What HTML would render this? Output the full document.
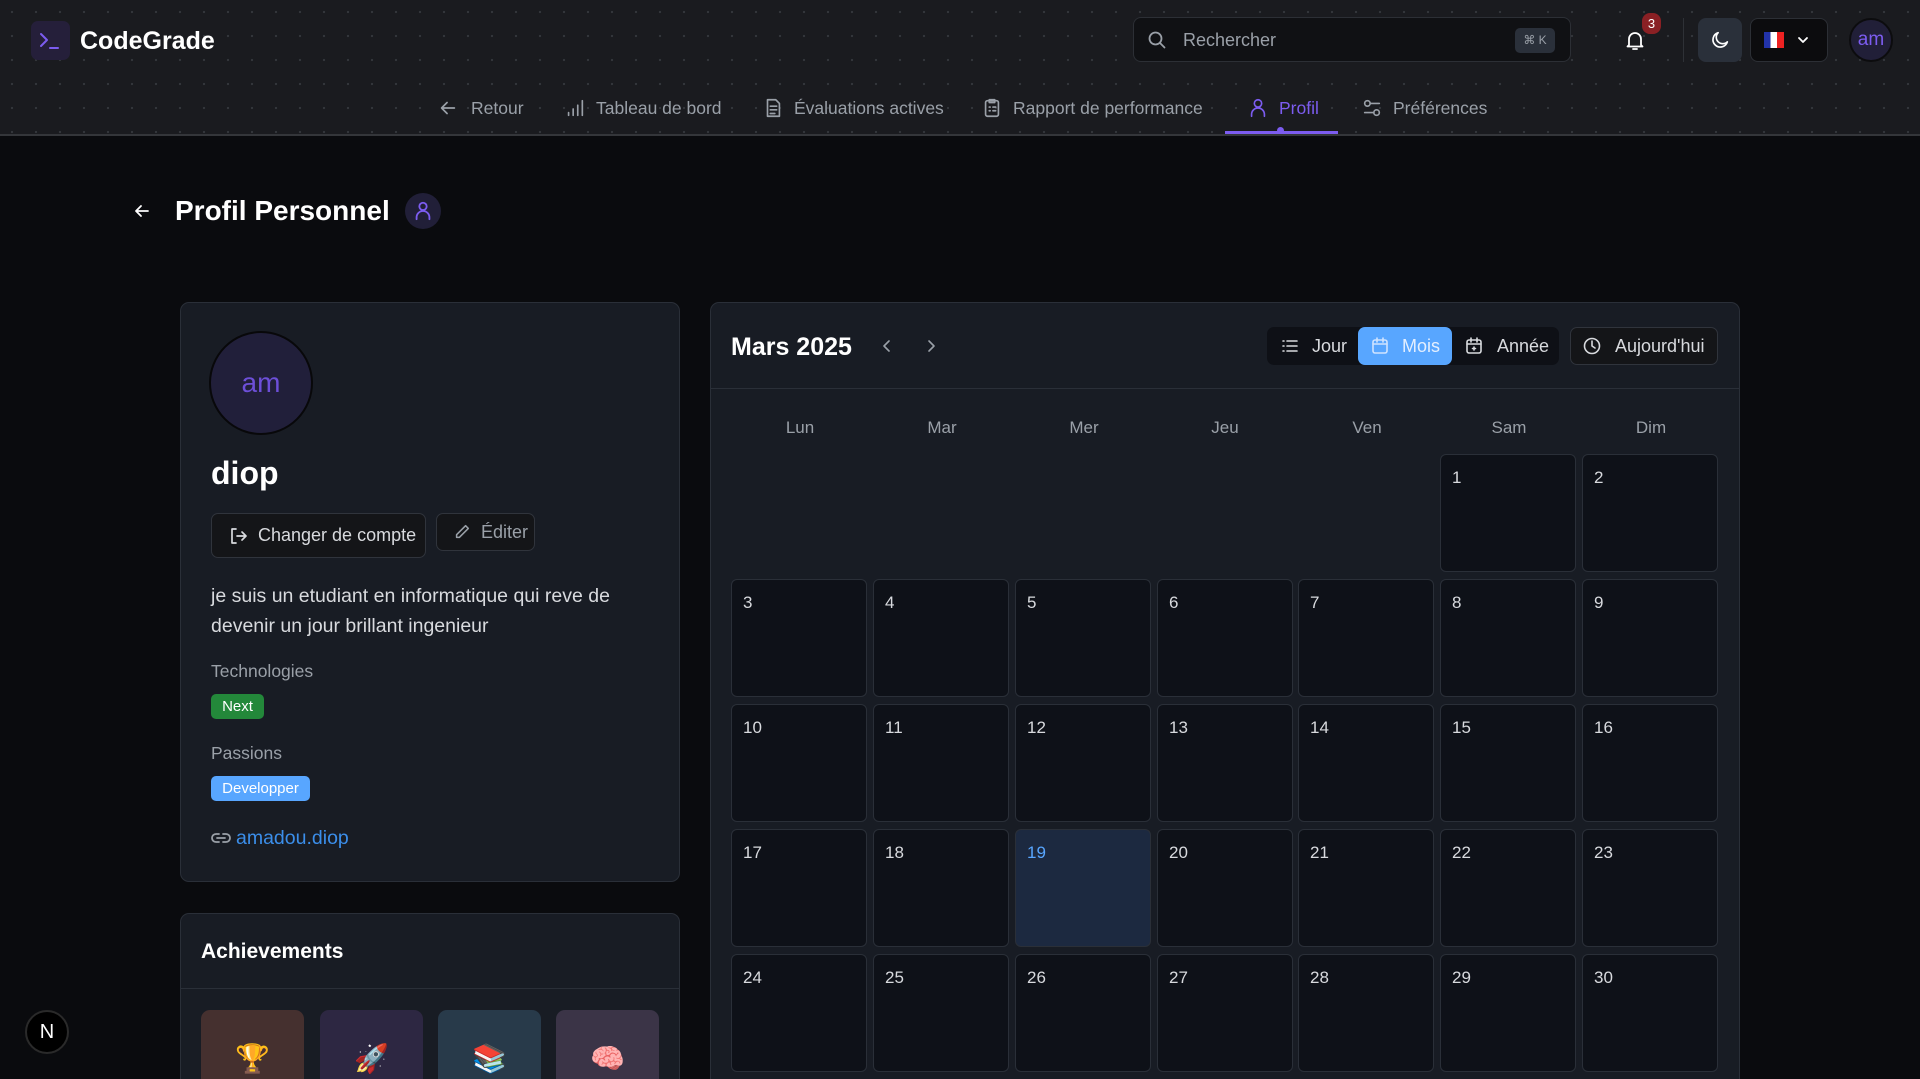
<!DOCTYPE html>
<html style="overflow:hidden;height:1079px"><head><meta charset="utf-8"><style>
*{box-sizing:border-box;margin:0;padding:0}
html,body{width:1920px;height:1079px;overflow:hidden}
body{background:#0a0b0e;font-family:"Liberation Sans",sans-serif;color:#e6e8eb}
#w{position:relative;width:1920px;height:1079px;overflow:hidden}
.abs{position:absolute}
header{position:absolute;left:0;top:0;width:1920px;height:136px;background-color:#1a1b1f;background-image:radial-gradient(circle,#34363c 1px,transparent 1.3px);background-size:24px 24px;border-bottom:2px solid #34363a}
.nav{position:absolute;top:96px;height:24px;display:flex;align-items:center;gap:8px;font-size:17.5px;color:#9aa0a8}
.nav svg{width:22px;height:22px;stroke:#9aa0a8;fill:none;stroke-width:1.8;stroke-linecap:round;stroke-linejoin:round}
.card{position:absolute;background:#181c24;border:1px solid #2a2f38;border-radius:9px}
.btn{position:absolute;border:1px solid #30343c;background:#141518;border-radius:7px;display:flex;align-items:center;gap:10px;color:#d8dade;font-size:18px;padding-left:16px}
.cell{position:absolute;width:136px;height:118px;background:#0e1118;border:1px solid #2a2f38;border-radius:6px;font-size:17px;color:#d8dade;padding:13px 0 0 11px}
.dl{position:absolute;top:418px;font-size:17px;color:#9aa0a8;width:100px;text-align:center}
svg.i{fill:none;stroke-linecap:round;stroke-linejoin:round}
.tile{position:absolute;top:1010px;width:103px;height:69px;border-radius:9px 9px 0 0;text-align:center;font-size:28px;padding-top:32px;overflow:hidden}
</style></head><body><div id="w">
<header>
 <div class="abs" style="left:31px;top:21px;width:39px;height:39px;background:#251f3a;border-radius:7px"></div>
 <svg class="abs i" style="left:38px;top:30px" width="24" height="22" viewBox="0 0 24 22" stroke="#7c5cf0" stroke-width="2"><path d="M3 4l6 6-6 6M12 18h8"/></svg>
 <div class="abs" style="left:80px;top:27px;font-size:25px;font-weight:bold;color:#fff">CodeGrade</div>
 <div class="abs" style="left:1133px;top:17px;width:438px;height:45px;background:#101114;border:1px solid #2c2f35;border-radius:8px"></div>
 <svg class="abs i" style="left:1147px;top:30px" width="20" height="20" viewBox="0 0 20 20" stroke="#9aa0a8" stroke-width="1.8"><circle cx="8.5" cy="8.5" r="6"/><path d="M13 13l4.5 4.5"/></svg>
 <div class="abs" style="left:1183px;top:30px;font-size:18px;color:#9aa0a8">Rechercher</div>
 <div class="abs" style="left:1515px;top:28px;width:40px;height:25px;background:#2a303a;border-radius:5px;font-size:12px;color:#9aa0a8;text-align:center;line-height:25px">⌘ K</div>
 <svg class="abs i" style="left:1623px;top:28px" width="24" height="24" viewBox="0 0 24 24" stroke="#fff" stroke-width="1.8"><path d="M6 17V11a6 6 0 0112 0v6l1.5 1.5h-15zM10 21h4"/></svg>
 <div class="abs" style="left:1642px;top:13px;width:19px;height:21px;background:#8a2024;border-radius:8px;font-size:13px;color:#fff;text-align:center;line-height:21px">3</div>
 <div class="abs" style="left:1683px;top:18px;width:1px;height:44px;background:#2e3136"></div>
 <div class="abs" style="left:1698px;top:18px;width:44px;height:44px;background:#2a303a;border-radius:8px"></div>
 <svg class="abs i" style="left:1709px;top:29px" width="22" height="22" viewBox="0 0 24 24" stroke="#fff" stroke-width="1.8"><path d="M20 14A8 8 0 1110 4a6 6 0 0010 10z"/></svg>
 <div class="abs" style="left:1750px;top:18px;width:78px;height:44px;background:#0c0c0e;border:1px solid #2c2f35;border-radius:8px"></div>
 <div class="abs" style="left:1764px;top:32px;width:20px;height:16px;background:linear-gradient(90deg,#2233aa 33%,#fff 33% 66%,#e22 66%)"></div>
 <svg class="abs i" style="left:1796px;top:33px" width="14" height="14" viewBox="0 0 14 14" stroke="#fff" stroke-width="1.8"><path d="M3 5l4 4 4-4"/></svg>
 <div class="abs" style="left:1849px;top:18px;width:44px;height:44px;background:#211f38;border:2px solid #0c0c0e;border-radius:50%;color:#7c5cf0;font-size:19px;text-align:center;line-height:40px">am</div>
 <div class="nav" style="left:437px"><svg viewBox="0 0 24 24"><path d="M19 12H5M11 6l-6 6 6 6"/></svg><span style="margin-left:4px">Retour</span></div>
 <div class="nav" style="left:564px"><svg viewBox="0 0 24 24"><path d="M5 20v-3M10 20v-7M15 20V9M20 20V4"/></svg><span style="margin-left:2px">Tableau de bord</span></div>
 <div class="nav" style="left:762px"><svg viewBox="0 0 24 24"><path d="M6 3h9l4 4v14H6zM9 10h7M9 14h7M9 18h5"/></svg><span style="margin-left:2px">Évaluations actives</span></div>
 <div class="nav" style="left:981px"><svg viewBox="0 0 24 24"><rect x="5" y="4" width="14" height="17" rx="2"/><path d="M9 3h6v3H9zM9 11h1M13 11h3M9 15h1M13 15h3"/></svg><span style="margin-left:2px">Rapport de performance</span></div>
 <div class="nav" style="left:1247px;color:#7c5cf0"><svg viewBox="0 0 24 24" style="stroke:#7c5cf0"><circle cx="12" cy="7" r="4"/><path d="M5 21v-2a7 7 0 0114 0v2"/></svg><span style="margin-left:2px">Profil</span></div>
 <div class="abs" style="left:1225px;top:131px;width:113px;height:3px;background:#7c5cf0"></div>
 <div class="abs" style="left:1277px;top:127px;width:7px;height:7px;background:#7c5cf0;border-radius:50%"></div>
 <div class="nav" style="left:1361px"><svg viewBox="0 0 24 24"><circle cx="7" cy="7" r="3"/><circle cx="17" cy="17" r="3"/><path d="M10 7h10M4 17h10"/></svg><span style="margin-left:2px">Préférences</span></div>
</header>

<svg class="abs i" style="left:132px;top:201px" width="20" height="20" viewBox="0 0 20 20" stroke="#fff" stroke-width="1.8"><path d="M16 10H4M9 5l-5 5 5 5"/></svg>
<div class="abs" style="left:175px;top:195px;font-size:28px;font-weight:bold;color:#fff">Profil Personnel</div>
<div class="abs" style="left:405px;top:193px;width:36px;height:36px;background:#211f38;border-radius:50%"></div>
<svg class="abs i" style="left:412px;top:200px" width="22" height="22" viewBox="0 0 24 24" stroke="#7c5cf0" stroke-width="2"><circle cx="12" cy="7" r="4"/><path d="M5 21v-2a7 7 0 0114 0v2"/></svg>

<div class="card" style="left:180px;top:302px;width:500px;height:580px"></div>
<div class="abs" style="left:209px;top:331px;width:104px;height:104px;background:#211f3a;border:2px solid #08080a;border-radius:50%;color:#6d4fd8;font-size:28px;text-align:center;line-height:100px">am</div>
<div class="abs" style="left:211px;top:455px;font-size:32px;font-weight:bold;color:#fff">diop</div>
<div class="btn" style="left:211px;top:513px;width:215px;height:45px"><svg class="i" width="20" height="20" viewBox="0 0 20 20" stroke="#d8dade" stroke-width="1.7"><path d="M8 3H4v14h4M9 10h8M14 6l4 4-4 4"/></svg>Changer de compte</div>
<div class="btn" style="left:436px;top:513px;width:99px;height:38px"><svg class="i" width="18" height="18" viewBox="0 0 20 20" stroke="#9aa0a8" stroke-width="1.7"><path d="M14 3l3 3L7 16H4v-3z"/></svg><span style="color:#9aa0a8">Éditer</span></div>
<div class="abs" style="left:211px;top:581px;font-size:19.5px;line-height:30px;color:#d8dade;width:440px">je suis un etudiant en informatique qui reve de devenir un jour brillant ingenieur</div>
<div class="abs" style="left:211px;top:661px;font-size:17.5px;color:#9aa0a8">Technologies</div>
<div class="abs" style="left:211px;top:694px;width:53px;height:25px;background:#23883a;border-radius:5px;color:#fff;font-size:15px;text-align:center;line-height:25px">Next</div>
<div class="abs" style="left:211px;top:743px;font-size:17.5px;color:#9aa0a8">Passions</div>
<div class="abs" style="left:211px;top:776px;width:99px;height:25px;background:#58a6ff;border-radius:5px;color:#fff;font-size:15px;text-align:center;line-height:25px">Developper</div>
<svg class="abs i" style="left:211px;top:829px" width="20" height="18" viewBox="0 0 20 18" stroke="#9aa0a8" stroke-width="1.8"><path d="M8 5H5a4 4 0 000 8h3M12 5h3a4 4 0 010 8h-3M6 9h8"/></svg>
<div class="abs" style="left:236px;top:827px;font-size:19.5px;color:#3b8eea">amadou.diop</div>

<div class="card" style="left:180px;top:913px;width:500px;height:166px;border-bottom:none;border-radius:9px 9px 0 0"></div>
<div class="abs" style="left:201px;top:940px;font-size:21px;font-weight:bold;color:#fff">Achievements</div>
<div class="abs" style="left:181px;top:988px;width:498px;height:1px;background:#2a2f38"></div>
<div class="tile" style="left:201px;background:#45302f">🏆</div>
<div class="tile" style="left:320px;background:#2d2742">🚀</div>
<div class="tile" style="left:438px;background:#283a4a">📚</div>
<div class="tile" style="left:556px;background:#3b3447">🧠</div>

<div class="abs" style="left:25px;top:1010px;width:44px;height:44px;background:#000;border:2px solid #2a2a2a;border-radius:50%;color:#fff;font-size:20px;text-align:center;line-height:40px">N</div>

<div class="card" style="left:710px;top:302px;width:1030px;height:777px;border-bottom:none;border-radius:9px 9px 0 0"></div>
<div class="abs" style="left:731px;top:333px;font-size:25px;font-weight:bold;color:#fff">Mars 2025</div>
<svg class="abs i" style="left:880px;top:337px" width="14" height="18" viewBox="0 0 14 18" stroke="#9aa0a8" stroke-width="1.6"><path d="M9 4L4 9l5 5"/></svg>
<svg class="abs i" style="left:924px;top:337px" width="14" height="18" viewBox="0 0 14 18" stroke="#9aa0a8" stroke-width="1.6"><path d="M5 4l5 5-5 5"/></svg>
<div class="abs" style="left:1267px;top:327px;width:292px;height:38px;background:#0e1016;border-radius:7px"></div>
<div class="abs" style="left:1358px;top:327px;width:94px;height:38px;background:#58a6ff;border-radius:7px"></div>
<svg class="abs i" style="left:1280px;top:336px" width="20" height="20" viewBox="0 0 20 20" stroke="#d8dade" stroke-width="1.6"><path d="M3 5h1M7 5h10M3 10h1M7 10h10M3 15h1M7 15h10"/></svg>
<div class="abs" style="left:1312px;top:336px;font-size:18px;color:#d8dade">Jour</div>
<svg class="abs i" style="left:1370px;top:336px" width="20" height="20" viewBox="0 0 20 20" stroke="#cfe3ff" stroke-width="1.6"><rect x="3" y="4" width="14" height="13" rx="2"/><path d="M3 8h14M7 2v4M13 2v4"/></svg>
<div class="abs" style="left:1402px;top:336px;font-size:18px;color:#e4efff">Mois</div>
<svg class="abs i" style="left:1464px;top:336px" width="20" height="20" viewBox="0 0 20 20" stroke="#d8dade" stroke-width="1.6"><rect x="3" y="4" width="14" height="13" rx="2"/><path d="M3 8h14M7 2v4M13 2v4M10 11v3M8.5 12.5h3"/></svg>
<div class="abs" style="left:1497px;top:336px;font-size:18px;color:#d8dade">Année</div>
<div class="abs" style="left:1570px;top:327px;width:148px;height:38px;background:#141518;border:1px solid #30343c;border-radius:7px"></div>
<svg class="abs i" style="left:1582px;top:336px" width="20" height="20" viewBox="0 0 20 20" stroke="#d8dade" stroke-width="1.6"><circle cx="10" cy="10" r="7.5"/><path d="M10 5v5l3 2"/></svg>
<div class="abs" style="left:1615px;top:336px;font-size:18px;color:#d8dade">Aujourd'hui</div>
<div class="abs" style="left:711px;top:388px;width:1028px;height:1px;background:#2a2f38"></div>

<div class="dl" style="left:750px">Lun</div><div class="dl" style="left:892px">Mar</div><div class="dl" style="left:1034px">Mer</div><div class="dl" style="left:1175px">Jeu</div><div class="dl" style="left:1317px">Ven</div><div class="dl" style="left:1459px">Sam</div><div class="dl" style="left:1601px">Dim</div>

<div class="cell" style="left:1440px;top:454px">1</div><div class="cell" style="left:1582px;top:454px">2</div>
<div class="cell" style="left:731px;top:579px">3</div><div class="cell" style="left:873px;top:579px">4</div><div class="cell" style="left:1015px;top:579px">5</div><div class="cell" style="left:1157px;top:579px">6</div><div class="cell" style="left:1298px;top:579px">7</div><div class="cell" style="left:1440px;top:579px">8</div><div class="cell" style="left:1582px;top:579px">9</div>
<div class="cell" style="left:731px;top:704px">10</div><div class="cell" style="left:873px;top:704px">11</div><div class="cell" style="left:1015px;top:704px">12</div><div class="cell" style="left:1157px;top:704px">13</div><div class="cell" style="left:1298px;top:704px">14</div><div class="cell" style="left:1440px;top:704px">15</div><div class="cell" style="left:1582px;top:704px">16</div>
<div class="cell" style="left:731px;top:829px">17</div><div class="cell" style="left:873px;top:829px">18</div><div class="cell" style="left:1015px;top:829px;background:#1c2940;color:#58a6ff">19</div><div class="cell" style="left:1157px;top:829px">20</div><div class="cell" style="left:1298px;top:829px">21</div><div class="cell" style="left:1440px;top:829px">22</div><div class="cell" style="left:1582px;top:829px">23</div>
<div class="cell" style="left:731px;top:954px">24</div><div class="cell" style="left:873px;top:954px">25</div><div class="cell" style="left:1015px;top:954px">26</div><div class="cell" style="left:1157px;top:954px">27</div><div class="cell" style="left:1298px;top:954px">28</div><div class="cell" style="left:1440px;top:954px">29</div><div class="cell" style="left:1582px;top:954px">30</div>
</div></body></html>
